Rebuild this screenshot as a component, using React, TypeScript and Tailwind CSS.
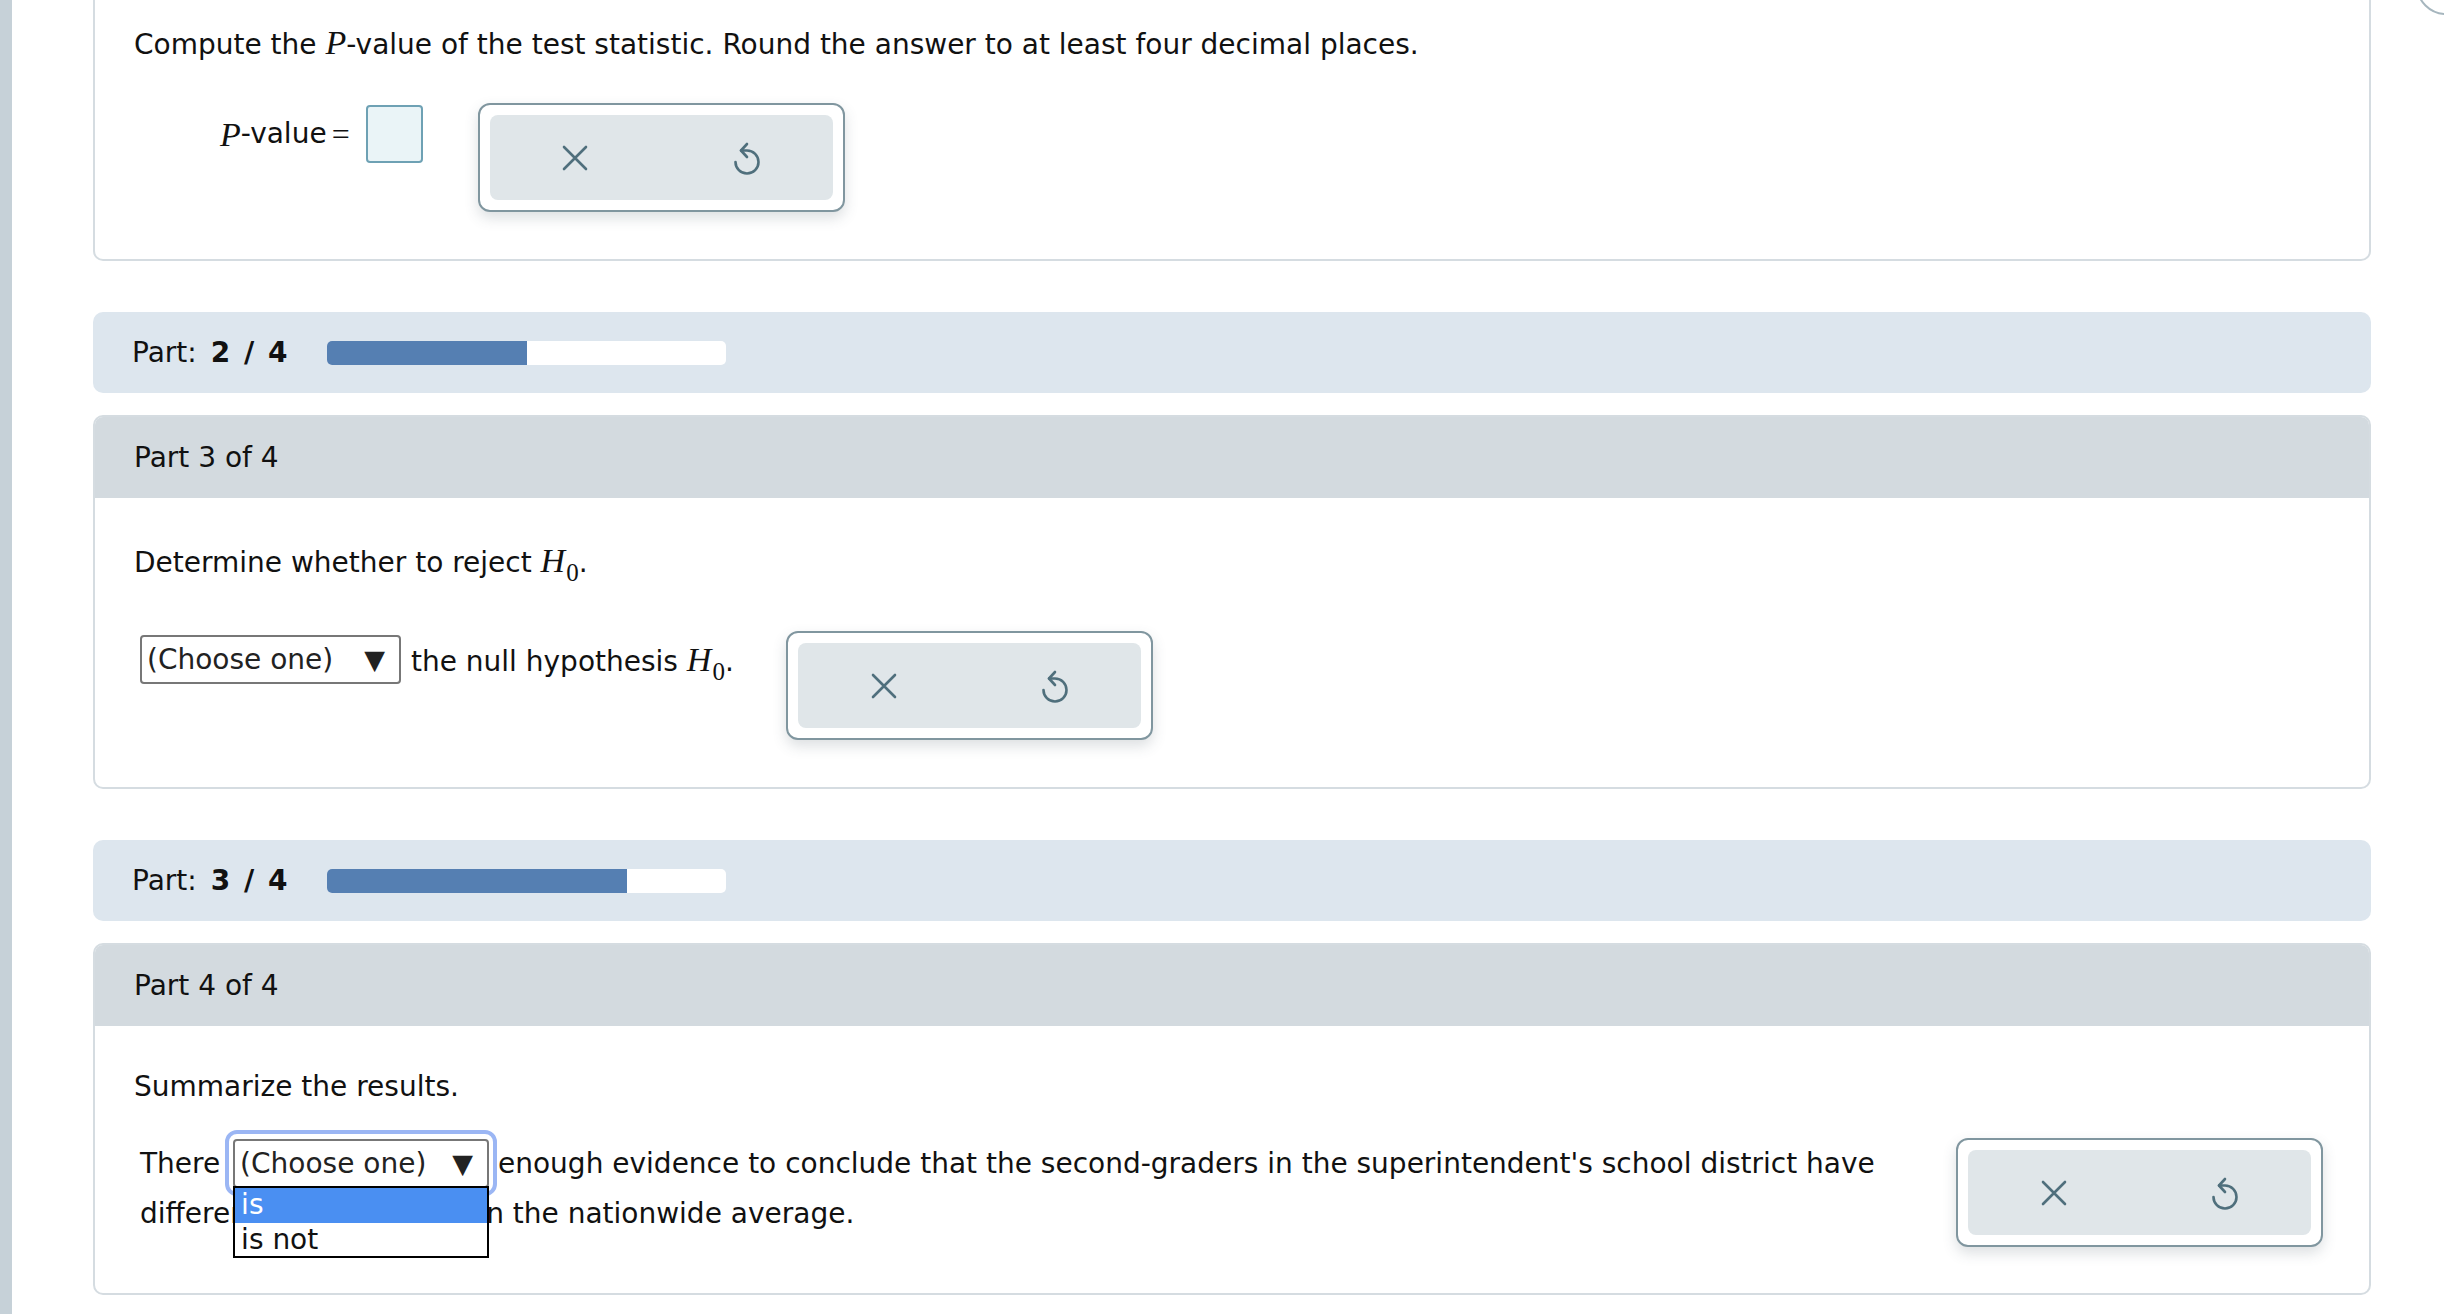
import React from 'react';

const SANS = { fontFamily: '"DejaVu Sans", Verdana, sans-serif' };
const SERIF = { fontFamily: '"Liberation Serif", "Times New Roman", serif' };

const XIcon = () => (
    <svg width="26" height="26" viewBox="0 0 26 26" fill="none" stroke="#4f6f7c" strokeWidth="2.6" strokeLinecap="round">
        <path d="M2 2 L24 24 M24 2 L2 24" />
    </svg>
);

const UndoIcon = () => (
    <svg width="28" height="34" viewBox="0 0 28 34" fill="none" stroke="#4f6f7c" strokeWidth="2.6" strokeLinecap="round" strokeLinejoin="round">
        <path d="M2.5 21 A11.5 11.5 0 1 0 14 9.5 H8" />
        <path d="M14 3 L8 9.5 L14 16" />
    </svg>
);

// the x / undo button group next to every answer
const ActionBox = () => (
    <div className="shrink-0 w-[367px] h-[109px] border-2 border-[#80969f] rounded-[12px] bg-white p-[10px] shadow-[0_6px_14px_rgba(60,80,90,0.18)]">
        <div className="h-full rounded-[8px] bg-[#e0e6e9] grid grid-cols-2 items-center justify-items-center">
            <XIcon />
            <UndoIcon />
        </div>
    </div>
);

const Math = ({ children }: { children: React.ReactNode }) => (
    <span className="italic text-[34px]" style={SERIF}>{children}</span>
);

const H0 = () => (
    <>
        <Math>H</Math>
        <span className="text-[25px] relative top-[9px] ml-[1px]" style={SERIF}>0</span>
    </>
);

const Select = ({ width }: { width: number }) => (
    <span
        className="inline-flex items-center justify-between h-[49px] border-2 border-[#777] rounded-[4px] bg-white pl-[5px] pr-[14px] text-[#222] align-middle"
        style={{ width: `${width}px` }}
    >
        <span>(Choose one)</span>
        <span className="text-[27px] leading-none">▼</span>
    </span>
);

const PartBar = ({ part, pct }: { part: number; pct: number }) => (
    <div className="h-[81px] rounded-[10px] bg-[#dde6ee] flex items-center pl-[39px]">
        <span>Part:</span>
        <b className="ml-[14px] tracking-[2px]">{part} / 4</b>
        <div className="ml-[38px] w-[399px] h-[24px] rounded-[5px] bg-white overflow-hidden">
            <div className="h-full bg-[#557fb2]" style={{ width: `${pct}%` }} />
        </div>
    </div>
);

const PartHeader = ({ label }: { label: string }) => (
    <div className="h-[81px] bg-[#d3dadf] flex items-center pl-[39px]">{label}</div>
);

export default function App() {
    return (
        <div className="relative flex min-h-[1314px] bg-white text-[28px] text-[#111] overflow-hidden" style={SANS}>
            <div className="w-[12px] shrink-0 bg-[#c6d1d8]" />

            {/* corner of a floating control, mostly off-screen */}
            <div className="absolute left-[2416px] -top-[45px] w-[70px] h-[60px] rounded-full border-2 border-[#a6b6be] bg-white" />

            <div className="ml-[81px] w-[2278px]">
                {/* Part 2 question (top scrolled away) */}
                <div className="border-2 border-t-0 border-[#d5dce1] rounded-b-[10px] pl-[39px] pt-[23px] pb-[47px]">
                    <div className="leading-[40px]">
                        Compute the <Math>P</Math>-value of the test statistic. Round the answer to at least four decimal places.
                    </div>
                    <div className="flex items-start mt-[38px]">
                        <div className="ml-[86px] mt-[2px] flex items-center h-[58px]">
                            <Math>P</Math>
                            <span>-value</span>
                            <span className="ml-[5px] mr-[16px] text-[32px]" style={SERIF}>=</span>
                            <div className="w-[57px] h-[58px] border-2 border-[#6ea1b4] rounded-[4px] bg-[#eaf4f7]" />
                        </div>
                        <div className="ml-[55px]">
                            <ActionBox />
                        </div>
                    </div>
                </div>

                <div className="mt-[51px]">
                    <PartBar part={2} pct={50} />
                </div>

                {/* Part 3 */}
                <div className="mt-[22px] border-2 border-[#d5dce1] rounded-[10px] overflow-hidden">
                    <PartHeader label="Part 3 of 4" />
                    <div className="pl-[39px] pt-[43px] pb-[47px]">
                        <div className="leading-[40px] h-[40px]">
                            Determine whether to reject <H0 />.
                        </div>
                        <div className="flex items-start mt-[50px]">
                            <div className="ml-[6px] mt-[3px] flex items-center">
                                <Select width={261} />
                                <span className="ml-[10px]">the null hypothesis <H0 />.</span>
                            </div>
                            <div className="ml-[52px]">
                                <ActionBox />
                            </div>
                        </div>
                    </div>
                </div>

                <div className="mt-[51px]">
                    <PartBar part={3} pct={75} />
                </div>

                {/* Part 4 */}
                <div className="mt-[22px] border-2 border-[#d5dce1] rounded-[10px] overflow-hidden">
                    <PartHeader label="Part 4 of 4" />
                    <div className="pl-[39px] pt-[41px] pb-[46px]">
                        <div className="leading-[40px]">Summarize the results.</div>
                        <div className="flex items-start mt-[31px]">
                            <p className="ml-[6px] mt-[1px] w-[1770px] leading-[50px]">
                                There{' '}
                                <span className="relative inline-block align-middle ml-[4px] -mt-[4px]">
                                    <span className="block rounded-[4px] outline-4 outline-[#9bb6f4] outline-offset-4">
                                        <Select width={256} />
                                    </span>
                                    <span className="absolute left-0 top-[48px] w-[256px] border-2 border-black bg-white leading-[34px] z-10">
                                        <span className="block pl-[6px] h-[35px] bg-[#4a8ff2] text-white">is</span>
                                        <span className="block pl-[6px] h-[33px]">is not</span>
                                    </span>
                                </span>{' '}
                                enough evidence to conclude that the second-graders in the superintendent's school district have different mean score than the nationwide average.
                            </p>
                            <div className="ml-[46px]">
                                <ActionBox />
                            </div>
                        </div>
                    </div>
                </div>
            </div>
        </div>
    );
}
